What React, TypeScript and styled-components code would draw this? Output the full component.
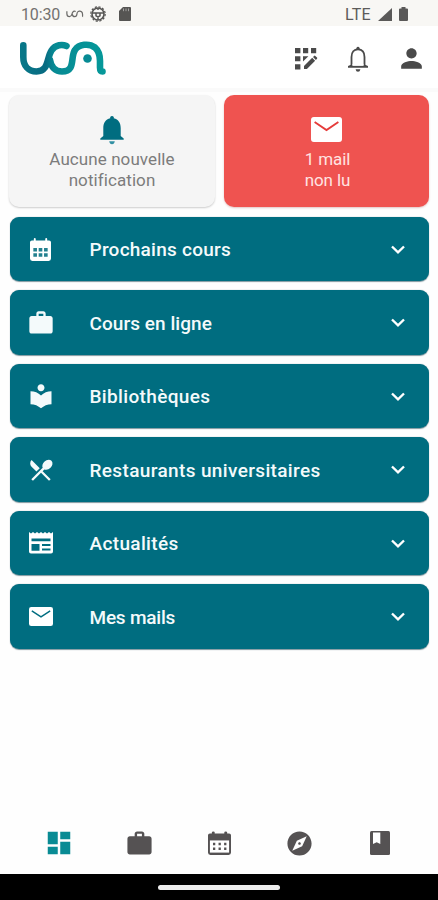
import React from "react";
import styled, { createGlobalStyle } from "styled-components";
import {
  MdPerson,
  MdWork,
  MdLocalLibrary,
  MdRestaurantMenu,
  MdDashboard,
  MdExplore,
} from "react-icons/md";

const Global = createGlobalStyle`
  * { box-sizing: border-box; }
  body { margin: 0; background: #fff; font-family: Roboto, "Liberation Sans", sans-serif; }
`;

const Screen = styled.div`
  width: 438px;
  height: 900px;
  display: flex;
  flex-direction: column;
  overflow: hidden;
  background: #fefefe;
  svg { display: block; flex: none; }
`;

const StatusBar = styled.div`
  height: 26px;
  padding: 3px 30px 0 21px;
  background: #f8f7f4;
  color: #5c5b5a;
  display: flex;
  justify-content: space-between;
  font-size: 16px;
  line-height: 23px;
`;

const StatusGroup = styled.div<{ $gap: number }>`
  display: flex;
  align-items: center;
  gap: ${(p) => p.$gap}px;
  height: 22px;
`;

const Clock = styled.span`
  width: 39px;
  color: #73716f;
  letter-spacing: -0.15px;
  white-space: nowrap;
`;

const Network = styled.span`
  width: 26px;
  letter-spacing: 0.3px;
`;

const Header = styled.header`
  height: 66px;
  flex: none;
  padding: 3px 11.5px 0 19px;
  display: flex;
  align-items: center;
  justify-content: space-between;
  border-bottom: 4px solid #fafafa;
  background: #fff;
  color: #4a4a4a;
`;

const HeaderActions = styled.div`
  display: flex;
  align-items: center;
  gap: 26.5px;
`;

const EditGridSlot = styled.span`
  margin-right: 3px;
`;

const Content = styled.main`
  flex: 1;
  padding: 3px 9px 0 9px;
`;

const Tiles = styled.div`
  display: grid;
  grid-template-columns: 206px 205px;
  justify-content: space-between;
  margin-bottom: 10px;
`;

const Tile = styled.section<{ $alert?: boolean }>`
  height: 111.5px;
  border-radius: 10px;
  display: flex;
  flex-direction: column;
  align-items: center;
  background: ${(p) => (p.$alert ? "#ef5350" : "#f5f5f5")};
  color: ${(p) => (p.$alert ? "#ffe3e1" : "#7c7c7c")};
  box-shadow: 0 1px 2px ${(p) => (p.$alert ? "rgba(160,60,60,.3)" : "rgba(0,0,0,.2)")};
`;

const TileIcon = styled.div`
  height: 54px;
  padding-top: 15px;
  display: flex;
  align-items: center;
`;

const TileText = styled.p<{ $left?: boolean }>`
  margin: 0;
  font-size: 17px;
  line-height: 21px;
  letter-spacing: ${(p) => (p.$left ? -0.1 : 0.08)}px;
  text-align: ${(p) => (p.$left ? "left" : "center")};
  padding-left: ${(p) => (p.$left ? 2 : 0)}px;
  white-space: pre-line;
`;

const Rows = styled.div`
  display: grid;
  gap: 9px;
  padding-left: 0.5px;
`;

const Row = styled.button`
  height: 64.5px;
  border: 0;
  border-radius: 9px;
  padding: 0 19px 0 18px;
  display: grid;
  grid-template-columns: 62px 1fr 24px;
  align-items: center;
  background: #006d80;
  color: #f4fafb;
  font: 500 19px Roboto, "Liberation Sans", sans-serif;
  text-align: left;
  box-shadow: 0 0.5px 1px rgba(0, 50, 65, 0.5);
`;

const RowLabel = styled.span<{ $spacing: number }>`
  letter-spacing: ${(p) => p.$spacing}px;
  white-space: nowrap;
  padding-top: 2px;
`;

const IconCell = styled.span`
  width: 26px;
  padding-top: 1px;
  display: flex;
  justify-content: center;
`;

const TabBar = styled.nav`
  height: 62px;
  padding: 0 17.5px 0 18.5px;
  display: grid;
  grid-template-columns: repeat(5, 1fr);
  place-items: center;
  color: #555253;
`;

const Tab = styled.span<{ $active?: boolean }>`
  color: ${(p) => (p.$active ? "#098b94" : "inherit")};
`;

const SystemBar = styled.div`
  height: 26px;
  flex: none;
  display: flex;
  justify-content: center;
  padding-top: 10.5px;
  background: #000;
`;

const HomePill = styled.div`
  width: 122px;
  height: 5px;
  border-radius: 3px;
  background: #ededed;
`;

const logoStroke =
  "M4.3 4.3V16C4.3 25 9.5 30.5 17.5 30.5C30 30.5 27.5 17 32.5 9.5C36.5 3.5 43.5 3.2 47.5 5M31 19C32 26 36.5 30.5 43 30.5C57 30.5 51 16 56 9C60 3 70 2 76 6.5C80 10 81 14 81 20V26.5Q81 30.5 83.5 30.5";

const Logo = () => (
  <svg width="88" height="35" viewBox="0 0 88 35" fill="none">
    <defs>
      <linearGradient id="brand" x1="0" x2="88" y1="0" y2="0" gradientUnits="userSpaceOnUse">
        <stop offset="0" stopColor="#087989" />
        <stop offset=".3" stopColor="#086b82" />
        <stop offset=".4" stopColor="#078b94" />
        <stop offset="1" stopColor="#05999a" />
      </linearGradient>
    </defs>
    <path d={logoStroke} stroke="url(#brand)" strokeWidth="6.6" strokeLinecap="round" strokeLinejoin="round" />
    <circle cx="68.5" cy="17.5" r="4.3" fill="#078b94" />
  </svg>
);

const MiniLogo = () => (
  <svg width="18" height="8" viewBox="0 0 88 35" fill="none">
    <path d={logoStroke} stroke="#6c6b69" strokeWidth="6" />
  </svg>
);

const WheelIcon = () => (
  <svg width="16" height="16" viewBox="0 0 16 16" fill="none" stroke="#565553">
    <circle cx="8" cy="8" r="6" strokeWidth="1.6" />
    <circle cx="8" cy="8" r="7.2" strokeWidth="1.2" strokeDasharray="2.2 1.6" />
    <path d="M2 7h12M6 7v2.8l2 1.2 2-1.2V7M8 11v3M8 2v2" strokeWidth="1.5" />
  </svg>
);

const CardIcon = () => (
  <svg width="12" height="14" viewBox="0 0 12 14">
    <path d="M4 0h7q1 0 1 1v12q0 1-1 1H1q-1 0-1-1V4z" fill="#565553" />
    <path d="M4.5 1.5v2.7M7 1.5v2.7M9.5 1.5v2.7" stroke="#b5b4b2" strokeWidth=".8" />
  </svg>
);

const SignalIcon = () => (
  <svg width="14" height="13" viewBox="0 0 14 13"><path d="M14 0v13H0z" fill="#5a5958" /></svg>
);

const BatteryIcon = () => (
  <svg width="9" height="14" viewBox="0 0 9 14">
    <path d="M2.5 1.5V0h4v1.5H8q1 0 1 1V13q0 1-1 1H1q-1 0-1-1V2.5q0-1 1-1z" fill="#5a5958" />
  </svg>
);

const EditGrid = () => (
  <svg width="24" height="24" viewBox="0 0 24 24" fill="currentColor">
    <path d="M1 1h5.4v5.2H1zM9 1h5.2v5.2H9zM17 1h5.2v5.2H17zM1 9.3h5.4v5H1zM1 17.2h5.4v5.2H1zM9 9.3h5.4L9 14.5z" />
    <path d="M10 19l8.2-8.2 2.9 2.9-8.2 8.2H10zM19 10l1.1-1.1q.6-.6 1.2 0l1.7 1.7q.6.6 0 1.2l-1.1 1.1z" />
  </svg>
);

const BellOutline = () => (
  <svg width="22" height="26" viewBox="0 0 22 26">
    <path d="M4.5 20V11C4.5 6 7 3.3 11 3.3S17.5 6 17.5 11v9" fill="none" stroke="currentColor" strokeWidth="1.8" />
    <path d="M9.3 3.5V2Q11-.5 12.7 2v1.5zM4 18.8L1 20v1.7h20V20l-3-1.2zM8.6 23.2h4.8Q13 25.7 11 25.7T8.6 23.2z" fill="currentColor" />
    <path d="M5.4 18h11.2v1.9H5.4z" fill="#fff" />
  </svg>
);

const BellSolid = () => (
  <svg width="24" height="30" viewBox="0 0 24 30" fill="#006d80">
    <path d="M10.2 3.2V2Q12-.2 13.8 2v1.2C18.5 4.2 20.7 8 20.7 13v8l3 2.5v1.3H.3v-1.3l3-2.5v-8C3.3 8 5.5 4.2 10.2 3.2z" />
    <path d="M9.2 26.3h5.6Q14.3 29.2 12 29.2T9.2 26.3z" fill="#3290a3" />
  </svg>
);

const Mail = ({ width, height, line }: { width: number; height: number; line: string }) => (
  <svg width={width} height={height} viewBox="0 0 30 24" preserveAspectRatio="none">
    <rect width="30" height="24" rx="2.8" fill="#fff" />
    <path d="M3.5 4.8L15 12.5 26.5 4.8" fill="none" stroke={line} strokeWidth="1.8" />
  </svg>
);

const RowCalendar = () => (
  <svg width="21" height="23" viewBox="0 0 22 24">
    <path d="M4 1q0-1 1-1t1 1v1.5h10V1q0-1 1-1t1 1v1.5h2q2 0 2 2V21.5q0 2.5-2.5 2.5h-17Q0 24 0 21.5v-17q0-2 2-2h2z" fill="#fff" />
    <path d="M3.5 10.5h3.8v3.6H3.5zM9.1 10.5h3.8v3.6H9.1zM14.7 10.5h3.8v3.6h-3.8zM3.5 16h3.8v3.6H3.5zM9.1 16h3.8v3.6H9.1zM14.7 16h3.8v3.6h-3.8z" fill="#23808f" />
  </svg>
);

const Newspaper = () => (
  <svg width="24" height="22" viewBox="0 0 24 22">
    <path d="M0 0l2 1.5L4 0l2 1.5L8 0l2 1.5L12 0l2 1.5L16 0l2 1.5L20 0l2 1.5L24 0v19.5q0 2-2 2H2q-2 0-2-2z" fill="#fff" />
    <path d="M2.5 6.5h19v2.8h-19zM2.5 12h8v6.8h-8zM13 12h8.5v2H13zM13 16.5h8.5v2H13z" fill="#006d80" />
  </svg>
);

const TabCalendar = () => (
  <svg width="23" height="25" viewBox="0 0 24 25">
    <path d="M4 1q0-1 1.5-1T7 1v1h10V1q0-1 1.5-1T20 1v1h2q2 0 2 2v18q0 2.5-2.5 2.5h-19Q0 24.500 0 22V4q0-2 2-2h2z" fill="currentColor" />
    <path d="M2 9.3h20V22H2z" fill="#fff" />
    <path d="M5.2 13h14M5.2 18h14" stroke="currentColor" strokeWidth="2.4" strokeDasharray="2.4 3.4" />
  </svg>
);

const BookmarkBook = () => (
  <svg width="20" height="24" viewBox="0 0 20 24">
    <path d="M1.5 0h17Q20 0 20 1.5v21q0 1.5-1.5 1.5h-17Q0 24 0 22.5v-21Q0 0 1.5 0z" fill="currentColor" />
    <path d="M3 1.5h7.3v11.5l-3.6-1.7L3 13z" fill="#fff" />
  </svg>
);

const Chevron = () => (
  <svg width="24" height="24" viewBox="0 0 24 24" fill="none">
    <path d="M6 9.5L12 15.3 18 9.500" stroke="#fff" strokeWidth="2.4" />
  </svg>
);

const rows = [
  { label: "Prochains cours", spacing: 0.25, icon: <RowCalendar /> },
  { label: "Cours en ligne", spacing: 0.05, icon: <MdWork size={28} /> },
  { label: "Bibliothèques", spacing: 0.35, icon: <MdLocalLibrary size={28} /> },
  { label: "Restaurants universitaires", spacing: 0.36, icon: <MdRestaurantMenu size={28} /> },
  { label: "Actualités", spacing: 0.35, icon: <Newspaper /> },
  { label: "Mes mails", spacing: -0.22, icon: <Mail width={24} height={19} line="#006d80" /> },
];

export default function App() {
  return (
    <Screen>
      <Global />
      <StatusBar>
        <StatusGroup $gap={6}>
          <Clock>10:30</Clock>
          <MiniLogo />
          <StatusGroup $gap={13}>
            <WheelIcon />
            <CardIcon />
          </StatusGroup>
        </StatusGroup>
        <StatusGroup $gap={7}>
          <Network>LTE</Network>
          <SignalIcon />
          <BatteryIcon />
        </StatusGroup>
      </StatusBar>
      <Header>
        <Logo />
        <HeaderActions>
          <EditGridSlot><EditGrid /></EditGridSlot>
          <BellOutline />
          <MdPerson size={31} />
        </HeaderActions>
      </Header>
      <Content>
        <Tiles>
          <Tile>
            <TileIcon><BellSolid /></TileIcon>
            <TileText>{"Aucune nouvelle\nnotification"}</TileText>
          </Tile>
          <Tile $alert>
            <TileIcon><Mail width={31} height={25} line="#e53b3a" /></TileIcon>
            <TileText $left>{"1 mail\nnon lu"}</TileText>
          </Tile>
        </Tiles>
        <Rows>
          {rows.map((r) => (
            <Row key={r.label}>
              <IconCell>{r.icon}</IconCell>
              <RowLabel $spacing={r.spacing}>{r.label}</RowLabel>
              <Chevron />
            </Row>
          ))}
        </Rows>
      </Content>
      <TabBar>
        <Tab $active><MdDashboard size={30} /></Tab>
        <Tab><MdWork size={29} /></Tab>
        <Tab><TabCalendar /></Tab>
        <Tab><MdExplore size={29} /></Tab>
        <Tab><BookmarkBook /></Tab>
      </TabBar>
      <SystemBar><HomePill /></SystemBar>
    </Screen>
  );
}
